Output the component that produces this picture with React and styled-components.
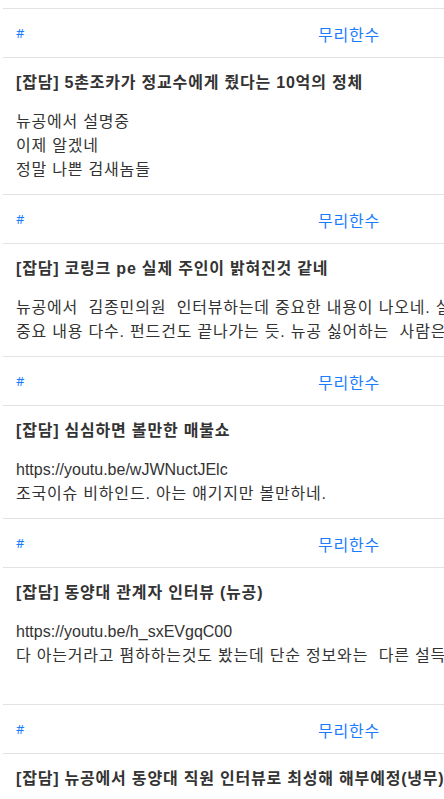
import React from "react";
import styled, { createGlobalStyle } from "styled-components";

const Global = createGlobalStyle`
  html, body { margin: 0; padding: 0; background: #fff; overflow: hidden; }
  body { font-family: "Liberation Sans", "Noto Sans CJK KR", sans-serif; color: #333; }
`;

const Page = styled.div`
  padding: 8px 0 0 3px;
  width: 1100px;
`;

const Item = styled.section`
  border-top: 1px solid #e1e1e6;
`;

const Header = styled.div`
  display: grid;
  grid-template-columns: 302px auto;
  align-items: center;
  height: 48px;
  padding-left: 13px;
  border-bottom: 1px solid #e1e1e6;
`;

const Hash = styled.a`
  font-family: "Noto Sans", sans-serif;
  font-size: 13px;
  color: #1a7cff;
  text-decoration: none;
  line-height: 1;
  margin-top: 1px;
`;

const Author = styled.a`
  font-family: "Noto Sans CJK KR", sans-serif;
  font-size: 16px;
  letter-spacing: 0.8px;
  color: #1a7cff;
  text-decoration: none;
  line-height: 1;
  margin-top: 1px;
`;

const Content = styled.div`
  padding: 13px 13px 12px;
`;

const Title = styled.h3`
  margin: 0 0 15px;
  font-size: 16px;
  font-weight: 700;
  letter-spacing: 0.8px;
  line-height: 24px;
  color: #333;
  white-space: nowrap;
`;

const Body = styled.div`
  font-size: 16px;
  letter-spacing: 0.8px;
  line-height: 24px;
  color: #333;
`;

const Line = styled.div`
  white-space: pre;
  min-height: 24px;
`;

const Url = styled.span`
  letter-spacing: 0;
`;

const posts = [
  {
    title: "[잡담] 5촌조카가 정교수에게 줬다는 10억의 정체",
    body: ["뉴공에서 설명중", "이제 알겠네", "정말 나쁜 검새놈들"],
  },
  {
    title: "[잡담] 코링크 pe 실제 주인이 밝혀진것 같네",
    body: [
      "뉴공에서  김종민의원  인터뷰하는데 중요한 내용이 나오네. 실제 주인은 따로 있다는",
      "중요 내용 다수. 펀드건도 끝나가는 듯. 뉴공 싫어하는  사람은 안 봐도 됨",
    ],
  },
  {
    title: "[잡담] 심심하면 볼만한 매불쇼",
    body: ["https://youtu.be/wJWNuctJElc", "조국이슈 비하인드. 아는 얘기지만 볼만하네."],
  },
  {
    title: "[잡담] 동양대 관계자 인터뷰 (뉴공)",
    body: [
      "https://youtu.be/h_sxEVgqC00",
      "다 아는거라고 폄하하는것도 봤는데 단순 정보와는  다른 설득력이 있네요",
      "",
    ],
  },
  {
    title: "[잡담] 뉴공에서 동양대 직원 인터뷰로 최성해 해부예정(냉무)",
    body: [],
  },
];

export default function App() {
  return (
    <>
      <Global />
      <Page>
        {posts.map((p, i) => (
          <Item key={i}>
            <Header>
              <Hash href="#">#</Hash>
              <Author href="#">무리한수</Author>
            </Header>
            <Content>
              <Title>{p.title}</Title>
              {p.body.length > 0 && (
                <Body>
                  {p.body.map((l, j) => (
                    <Line key={j}>
                      {l.startsWith("http") ? <Url>{l}</Url> : l}
                    </Line>
                  ))}
                </Body>
              )}
            </Content>
          </Item>
        ))}
      </Page>
    </>
  );
}
